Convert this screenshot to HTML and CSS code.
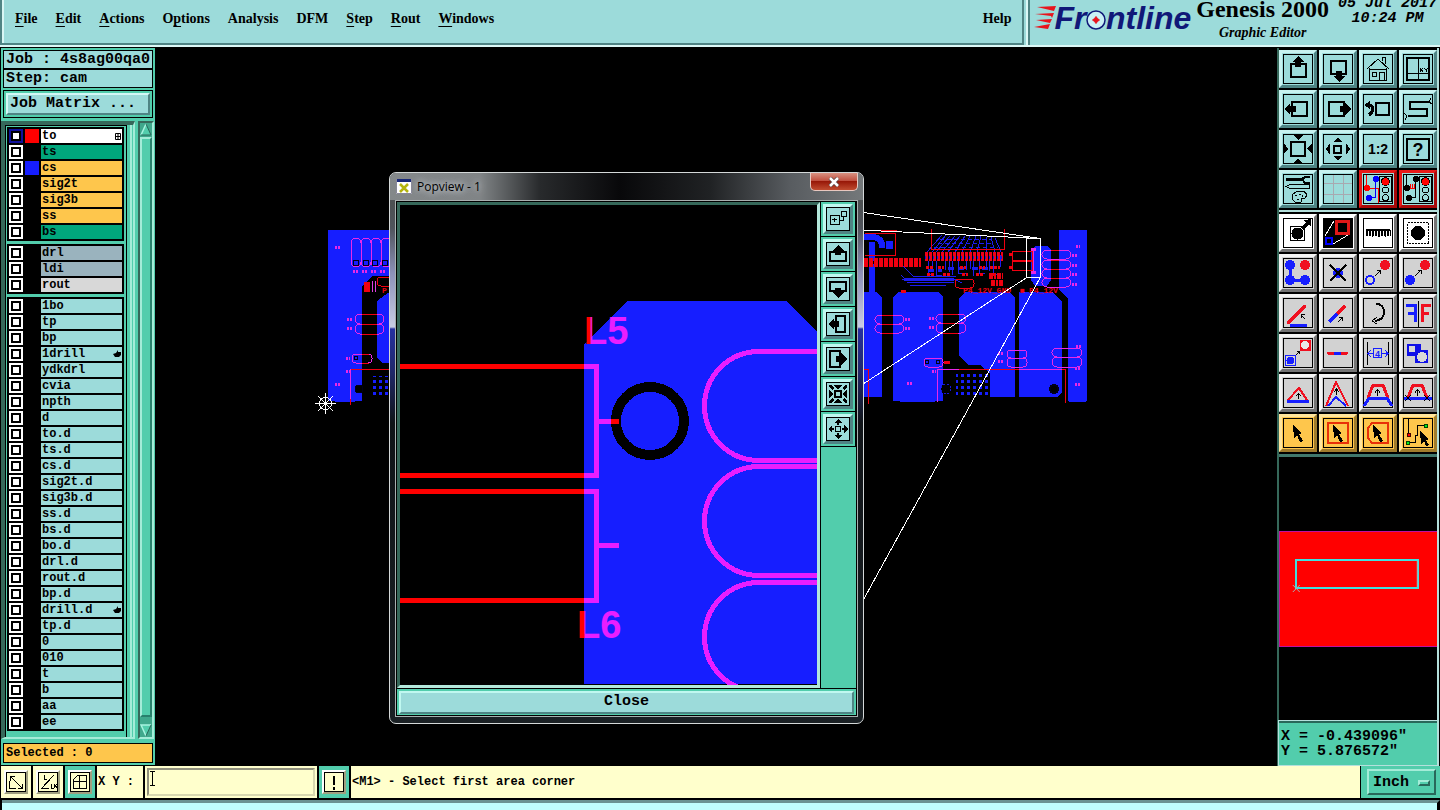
FILE: index.html
```html
<!DOCTYPE html>
<html lang="en">
<head>
<meta charset="utf-8">
<title>Genesis 2000 Graphic Editor</title>
<link rel="stylesheet" href="styles.css">
</head>
<body>
<header class="topbar">
  <nav class="menubar">
    <button class="menu"><u>F</u>ile</button>
    <button class="menu"><u>E</u>dit</button>
    <button class="menu"><u>A</u>ctions</button>
    <button class="menu">O<u>p</u>tions</button>
    <button class="menu">Analysis</button>
    <button class="menu">DFM</button>
    <button class="menu"><u>S</u>tep</button>
    <button class="menu"><u>R</u>out</button>
    <button class="menu"><u>W</u>indows</button>
    <button class="menu menu-help">Help</button>
  </nav>
  <div class="brand">
    <div class="logo">
      <svg class="logo-speed" width="22" height="24" viewBox="0 0 22 24" fill="#e8141c"><path d="M3 1l19-1-2 5zM1 8l19-1-2 5-1-2zM2 14l16-1-2 4zM0 21l16-3-2 5z"/></svg>
      <span class="logo-text">Fr<span class="logo-o">o<svg width="20" height="20" viewBox="0 0 20 20"><circle cx="10" cy="10" r="9" fill="#c9f0f4" stroke="#101878" stroke-width="1.5"/><path d="M10 6.500l1.500 2 2 1.500-2 1.500-1.500 2-1.500-2-2-1.500 2-1.500z" fill="#e8141c" stroke="#e8141c"/></svg></span>ntline</span>
    </div>
    <div class="product"><div class="product-name">Genesis 2000</div><div class="product-sub">Graphic Editor</div></div>
    <div class="clock">05 Jul 2017<br>10:24 PM</div>
  </div>
</header>

<main class="main">
  <aside class="left">
    <div class="jobbox"><div class="jobline">Job : 4s8ag00qa0</div><div class="jobline">Step: cam</div></div>
    <div class="matrix-frame"><button class="matrix">Job Matrix ...</button></div>
    <div class="layers">
      <div class="layer-frame"><div class="layer-inner">
        <div class="group">
          <label class="layer current"><input type="checkbox"><i class="swatch red"></i><span class="tag white">to<svg width="6" height="7" viewBox="0 0 6 7"><path d="M.5.500h5v6h-5zM3 0v7M0 3.500h6" fill="none" stroke="#000"/></svg></span></label>
          <label class="layer"><input type="checkbox"><i class="swatch"></i><span class="tag green">ts</span></label>
          <label class="layer"><input type="checkbox"><i class="swatch blue"></i><span class="tag gold">cs</span></label>
          <label class="layer"><input type="checkbox"><i class="swatch"></i><span class="tag gold">sig2t</span></label>
          <label class="layer"><input type="checkbox"><i class="swatch"></i><span class="tag gold">sig3b</span></label>
          <label class="layer"><input type="checkbox"><i class="swatch"></i><span class="tag gold">ss</span></label>
          <label class="layer"><input type="checkbox"><i class="swatch"></i><span class="tag green">bs</span></label>
        </div>
        <div class="group">
          <label class="layer"><input type="checkbox"><i class="swatch"></i><span class="tag slate">drl</span></label>
          <label class="layer"><input type="checkbox"><i class="swatch"></i><span class="tag slate">ldi</span></label>
          <label class="layer"><input type="checkbox"><i class="swatch"></i><span class="tag grey">rout</span></label>
        </div>
        <div class="group">
          <label class="layer"><input type="checkbox"><i class="swatch"></i><span class="tag">1bo</span></label>
          <label class="layer"><input type="checkbox"><i class="swatch"></i><span class="tag">tp</span></label>
          <label class="layer"><input type="checkbox"><i class="swatch"></i><span class="tag">bp</span></label>
          <label class="layer"><input type="checkbox"><i class="swatch"></i><span class="tag">1drill<svg width="8" height="8" viewBox="0 0 8 8"><path d="M0 4l3-1 2-3v2h3v3l-2 2H2z"/></svg></span></label>
          <label class="layer"><input type="checkbox"><i class="swatch"></i><span class="tag">ydkdrl</span></label>
          <label class="layer"><input type="checkbox"><i class="swatch"></i><span class="tag">cvia</span></label>
          <label class="layer"><input type="checkbox"><i class="swatch"></i><span class="tag">npth</span></label>
          <label class="layer"><input type="checkbox"><i class="swatch"></i><span class="tag">d</span></label>
          <label class="layer"><input type="checkbox"><i class="swatch"></i><span class="tag">to.d</span></label>
          <label class="layer"><input type="checkbox"><i class="swatch"></i><span class="tag">ts.d</span></label>
          <label class="layer"><input type="checkbox"><i class="swatch"></i><span class="tag">cs.d</span></label>
          <label class="layer"><input type="checkbox"><i class="swatch"></i><span class="tag">sig2t.d</span></label>
          <label class="layer"><input type="checkbox"><i class="swatch"></i><span class="tag">sig3b.d</span></label>
          <label class="layer"><input type="checkbox"><i class="swatch"></i><span class="tag">ss.d</span></label>
          <label class="layer"><input type="checkbox"><i class="swatch"></i><span class="tag">bs.d</span></label>
          <label class="layer"><input type="checkbox"><i class="swatch"></i><span class="tag">bo.d</span></label>
          <label class="layer"><input type="checkbox"><i class="swatch"></i><span class="tag">drl.d</span></label>
          <label class="layer"><input type="checkbox"><i class="swatch"></i><span class="tag">rout.d</span></label>
          <label class="layer"><input type="checkbox"><i class="swatch"></i><span class="tag">bp.d</span></label>
          <label class="layer"><input type="checkbox"><i class="swatch"></i><span class="tag">drill.d<svg width="8" height="8" viewBox="0 0 8 8"><path d="M0 4l3-1 2-3v2h3v3l-2 2H2z"/></svg></span></label>
          <label class="layer"><input type="checkbox"><i class="swatch"></i><span class="tag">tp.d</span></label>
          <label class="layer"><input type="checkbox"><i class="swatch"></i><span class="tag">0</span></label>
          <label class="layer"><input type="checkbox"><i class="swatch"></i><span class="tag">010</span></label>
          <label class="layer"><input type="checkbox"><i class="swatch"></i><span class="tag">t</span></label>
          <label class="layer"><input type="checkbox"><i class="swatch"></i><span class="tag">b</span></label>
          <label class="layer"><input type="checkbox"><i class="swatch"></i><span class="tag">aa</span></label>
          <label class="layer"><input type="checkbox"><i class="swatch"></i><span class="tag">ee</span></label>
        </div>
      </div></div>
      <div class="scroll">
        <svg width="12" height="13" viewBox="0 0 12 13"><rect width="12" height="13" fill="#3fa88c"/><path d="M6 1l5 11H1z" fill="#52cdac"/><path d="M6 1L1 12" stroke="#a8f4e0" stroke-width="1.500"/><path d="M6 1l5 11H1" fill="none" stroke="#28685a"/></svg>
        <div class="thumb"></div>
        <svg width="12" height="13" viewBox="0 0 12 13"><rect width="12" height="13" fill="#3fa88c"/><path d="M1 1h10L6 12z" fill="#52cdac"/><path d="M11 1H1l5 11" fill="none" stroke="#a8f4e0" stroke-width="1.500"/><path d="M11 1L6 12" stroke="#28685a"/></svg>
      </div>
    </div>
    <div class="selected">Selected : 0</div>
  </aside>

  <section class="workspace">
    <svg class="board" viewBox="155 48 1122 718" preserveAspectRatio="xMinYMin slice" fill="none" shape-rendering="crispEdges">
      <defs>
        <pattern id="dots" width="6" height="6" patternUnits="userSpaceOnUse"><rect x="1" y="2" width="3" height="3" fill="#161eff"/></pattern>
      </defs>
      <g fill="#161eff">
        <path d="M328 230h62v46h-18l-10 11v114h-34z"/>
        <path d="M392 290l-15 11v57l5 5h10z"/>
        <path d="M864 292h12l6 6v99h-18z"/>
        <path d="M893 297l5-5h40l5 5v104h-50z"/>
        <path d="M959 298l6-6h45l5 6v99h-25v-24l-10-8h-12l-9-9z"/>
        <path d="M1019 292h33l10 10v90l-5 5h-38z"/>
        <path d="M1059 230h28v171h-19V299l-9-9z"/>
        <path d="M1035 246h12l4 4v30l-4 6h-12l-4-6v-30z"/>
        <path d="M886 241h7v8h-7zM869 242h6v50h-6z"/>
        <path d="M1069 401h17v1h-17zM335 401h20v1h-20zM900 401h35v1h-35z"/>
      </g>
      <path d="M864 237h10q9 2 8 11" stroke="#161eff" stroke-width="6"/>
      <!-- connector fan-out traces -->
      <g stroke="#1c1cf0">
        <path d="M942 235l-15 17M946 235l-14 17M950 236l-14 16M955 236l-13 16M960 236l-12 16M965 236l-10 16M970 236l-8 16M976 236l-6 16M981 236l-4 16M986 237l1 15M991 237l4 15M995 238l6 14"/>
        <path d="M940 239h52M938 243h55M934 247h64" stroke-dasharray="4 3"/>
        <path d="M928 261v12l4 2M932 261v9M936 261v14h6M945 261v9M949 261v11M952 261v14M958 261v12h9M966 261v9M970 261v8M973 261v15M979 261v12h6M986 261v9M989 261v10M993 261v13h6M1000 255v12"/>
        <path d="M899 262l14 14h43M902 279h52l8 4M907 282h47M910 285h36M905 279l-4-4"/>
        <path d="M928 270h14M948 268h16M972 268h20" stroke-width="3" stroke-dasharray="6 4"/>
      </g>
      <path d="M904 279h50" stroke="#1c1cf0" stroke-width="3"/>
      <path d="M925 256h78" stroke="#f00018" stroke-width="9" stroke-dasharray="3 1"/>
      <path d="M925 257h78" stroke="#1818d8" stroke-width="3" stroke-dasharray="1 3"/>
      <g stroke="#f00010">
        <path d="M864 262h57" stroke-width="9" stroke-dasharray="4 1"/>
        <path d="M868 262h52" stroke="#000" stroke-width="3" stroke-dasharray="1 4"/>
        <path d="M865 233.500h30v22h-30M931.500 229v20h73v-20M1012 251.500h20v9h-20zM1012 261.500h20v9h-20zM865 230.500h32"/>
        <path d="M926 267h8M938 267h6M960 267h6M979 267h6M990 267h10M927 274h8M943 274h8M962 274h6M976 274h8M993 274h8" stroke-width="3" stroke-dasharray="3 1"/>
        <path d="M989 276h14M991 283h12" stroke-width="6" stroke-dasharray="4 1 2 1"/>
        <rect x="955" y="279" width="19" height="9" rx="4"/>
        <path d="M901 291h5M1009 254h3M1009 267h3" stroke-width="3"/>
        <path d="M937.500 369.500h128v33M864 369.500h4.500v34M350.500 369.500H390M350.500 369v36"/>
        <rect x="377" y="277" width="18" height="9" rx="4"/>
        <path d="M367 282v10" stroke-width="6"/><path d="M372 281v11M375 281v11" stroke="#e040e0"/>
      </g>
      <g font-family="Liberation Mono, monospace" font-size="8" fill="#f00010">
        <text x="963" y="293">P4_12V_GND</text><text x="1020" y="293">■</text><text x="1029" y="293">P4_12V</text><text x="382" y="293">P</text>
      </g>
      <g stroke="#e828e8">
        <rect x="351" y="238" width="10" height="29" rx="5"/><rect x="361" y="238" width="10" height="29" rx="5"/><rect x="371" y="238" width="10" height="29" rx="5"/><rect x="381" y="238" width="10" height="29" rx="5"/>
        <rect x="355" y="314" width="29" height="10" rx="5"/><rect x="355" y="324" width="29" height="10" rx="5"/><rect x="352" y="354" width="20" height="9" rx="4"/>
        <rect x="1042" y="250" width="29" height="9" rx="5"/><rect x="1042" y="260" width="29" height="9" rx="5"/><rect x="1042" y="269" width="29" height="9" rx="5"/><rect x="1042" y="278" width="29" height="9" rx="5"/>
        <rect x="875" y="315" width="29" height="9" rx="5"/><rect x="875" y="324" width="29" height="9" rx="5"/>
        <rect x="936" y="314" width="30" height="9" rx="5"/><rect x="936" y="323" width="30" height="10" rx="5"/><rect x="924" y="358" width="19" height="9" rx="4"/>
        <rect x="1007" y="350" width="20" height="8" rx="4"/><rect x="1007" y="358" width="20" height="9" rx="4"/>
        <rect x="1052" y="348" width="30" height="9" rx="5"/><rect x="1052" y="357" width="30" height="10" rx="5"/>
        <path d="M937.500 369v33M350.500 369v30M938 369.500h21M1019 369.500h43M1033.500 248v26"/>
      </g>
      <g stroke="#f00010"><path d="M362 314.500h15M362 324.500h15M362 334.500h15M362 354.500h7M362 363.500h7M882 315.500h11M882 324.500h11M882 333.500h11M943 314.500h15M943 323.500h15M943 333.500h15M1051 250.500h8M1051 260.500h8M1051 269.500h8M1051 278.500h8"/></g>
      <g stroke="#e828e8" stroke-width="3" stroke-dasharray="2 1">
        <path d="M335 247.500h6M353 271.500h6M362 271.500h6M371 271.500h6M380 271.500h6M347 319.500h5M347 328.500h5M346 358.500h4M346 371.500h4M335 384.500h6M905 319.500h6M905 328.500h6M929 318.500h6M929 327.500h6M932 371.500h4M907 383.500h6M998 353.500h6M998 361.500h6M1076 246.500h4M1072 255.500h5M1072 265.500h5M1072 274.500h5M1072 284.500h5M1076 346.500h5M1075 368.500h6M1075 384.500h6M1031 249.500h5M1031 272.500h5"/>
      </g>
      <path d="M944 362.500h6" stroke="#f00010" stroke-width="3"/>
      <g stroke="#000018" fill="none">
        <circle cx="356" cy="263" r="3"/><circle cx="366" cy="263" r="3"/><circle cx="375" cy="263" r="3"/><circle cx="385" cy="263" r="3"/>
        <circle cx="359" cy="389" r="4" fill="#000"/><circle cx="1054" cy="389" r="4" fill="#000" stroke-width="2"/>
        <circle cx="927" cy="362" r="2"/><circle cx="938" cy="362" r="2"/><circle cx="356" cy="358" r="2"/>
      </g>
      <path d="M943 384q-4 5 0 10z" fill="#000"/><circle cx="946" cy="389" r="5" stroke="#1818d8" stroke-dasharray="2 2"/>
      <rect x="956" y="374" width="33" height="24" fill="url(#dots)"/><rect x="370" y="376" width="20" height="21" fill="url(#dots)"/>
      <g stroke="#fff">
        <path d="M860 212l180 26.500M860 230l180 8.500M1026.500 238.500h14v39h-14zM1026 278L860 386M1040 278L860 606"/>
        <path d="M315 403.500h21M325.500 393v21M318 396l15 15M318 411l15-15"/><circle cx="325.500" cy="403.500" r="6"/>
      </g>
    </svg>

    <div class="popup">
      <div class="popup-title">
        <svg class="popup-icon" width="16" height="15" viewBox="0 0 16 15"><rect width="16" height="15" fill="#fff"/><rect width="16" height="3" fill="#182878"/><path d="M4 5l8 8M12 5l-8 8" stroke="#b4b410" stroke-width="2.500"/><path d="M.5 0v14.500h15V0" fill="none" stroke="#889"/></svg>
        <span class="popup-name">Popview - 1</span>
        <button class="popup-x" aria-label="Close window"><svg width="12" height="10" viewBox="0 0 12 10"><path d="M2 1l8 8M10 1L2 9" stroke="#544" stroke-width="4"/><path d="M2 1l8 8M10 1L2 9" stroke="#fff" stroke-width="2.500"/></svg></button>
      </div>
      <div class="popup-body">
        <div class="popup-content">
          <svg class="view" width="417" height="480" viewBox="400 205 417 480" fill="none" shape-rendering="crispEdges">
            <defs>
              <linearGradient id="cut5" gradientUnits="userSpaceOnUse" x1="590" x2="591" y1="0" y2="0"><stop offset="0" stop-color="#f00"/><stop offset="1" stop-color="#e81eff"/></linearGradient>
              <linearGradient id="cut6" gradientUnits="userSpaceOnUse" x1="584" x2="585" y1="0" y2="0"><stop offset="0" stop-color="#f00"/><stop offset="1" stop-color="#e81eff"/></linearGradient>
            </defs>
            <path d="M584 684V344l44-43h158l31 31v352z" fill="#161eff"/>
            <circle cx="650" cy="421" r="34" stroke="#000" stroke-width="10"/>
            <g stroke="#f00" stroke-width="5"><path d="M400 366.500h184M400 475.500h184M400 491.500h184M400 600.500h184"/></g>
            <g stroke="#e81eff" stroke-width="5">
              <path d="M584 366.500h12v109h-12M596 421.500h23M584 491.500h12v109h-12M596 545.500h23"/>
              <path d="M820 351.500h-61a54.500 54.500 0 0 0 0 109h61M820 466.500h-61a54.500 54.500 0 0 0 0 109h61M820 582.500h-61a54.500 54.500 0 0 0 0 109h61"/>
            </g>
            <path d="M611 421.500h8" stroke="#f00" stroke-width="5"/>
            <g font-family="Liberation Sans, sans-serif" font-weight="700" font-size="38"><text x="584" y="344" fill="url(#cut5)">L5</text><text x="577" y="638" fill="url(#cut6)">L6</text></g>
          </svg>
          <div class="popup-tools">
            <button class="ptool" aria-label="Detach view"><svg viewBox="0 0 22 22"><path class="o" d="M3 7h9v9H3zM14 3h5v5h-5zM12 12h4V8M5 11.500h5M7 9.500v4"/></svg></button>
            <button class="ptool" aria-label="Pan up"><svg viewBox="0 0 22 22"><path class="b" d="M3 9h16v9H3z"/><path class="k" d="M11 2l6 6h-3v4H8V8H5z"/></svg></button>
            <button class="ptool" aria-label="Pan down"><svg viewBox="0 0 22 22"><path class="b" d="M3 4h16v9H3z"/><path class="k" d="M11 20l6-6h-3v-4H8v4H5z"/></svg></button>
            <button class="ptool" aria-label="Pan left"><svg viewBox="0 0 22 22"><path class="b" d="M9 3h9v16H9z"/><path class="k" d="M1 11l6-6v3h5v6H7v3z"/></svg></button>
            <button class="ptool" aria-label="Pan right"><svg viewBox="0 0 22 22"><path class="b" d="M3 3h10v16H3z"/><path class="k" d="M20 11l-6-6v3H9v6h5v3z"/></svg></button>
            <button class="ptool" aria-label="Zoom in"><svg viewBox="0 0 22 22"><path class="b" d="M8 8h6v6H8z"/><path class="k" d="M6 2h10l-5 4zM6 20h10l-5-4zM2 6v10l4-5zM20 6v10l-4-5zM2 2h2l3 3-2 2-3-3zM20 2h-2l-3 3 2 2 3-3zM2 20h2l3-3-2-2-3 3zM20 20h-2l-3-3 2-2 3 3z"/></svg></button>
            <button class="ptool" aria-label="Zoom out"><svg viewBox="0 0 22 22"><path class="o" d="M8.500 8.500h5v5h-5z"/><path class="k" d="M11 1l4 4h-3v2h-2V5H7zM11 21l4-4h-3v-2h-2v2H7zM1 11l4-4v8zM21 11l-4-4v8zM5 10h2v2H5zM15 10h2v2h-2z"/></svg></button>
          </div>
        </div>
        <div class="close-frame"><button class="close">Close</button></div>
      </div>
    </div>
  </section>

  <aside class="right">
    <div class="tools">
      <button class="tool" aria-label="Pan up"><svg viewBox="0 0 30 30"><path class="b" d="M8 10h15v13H8z"/><path class="k" d="M15 2l6 6h-3v5h-6V8H9z"/></svg></button>
      <button class="tool" aria-label="Pan down"><svg viewBox="0 0 30 30"><path class="b" d="M8 7h15v13H8z"/><path class="k" d="M16 28l6-6h-3v-5h-6v5h-3z"/></svg></button>
      <button class="tool" aria-label="Home"><svg viewBox="0 0 30 30"><path class="o" d="M4 15L15 5l11 10M6.500 14v12h17V14M6 15h18M9.500 18h4v4h-4zM16.500 26v-8h5v8M19 7V3M22 10V3h-3M21 1l3-1"/></svg></button>
      <button class="tool" aria-label="XY view"><svg viewBox="0 0 30 30"><path class="b" d="M4 4h22v22H4z"/><path class="o" d="M15.500 4v22M4 19.500h22M17 14l3 4M20 14l-3 4M21 14l2 2 2-2M23 16v2"/></svg></button>
      <button class="tool" aria-label="Pan left"><svg viewBox="0 0 30 30"><path class="b" d="M9 8h15v14H9z"/><path class="k" d="M1 15l6-6v3h6v6H7v3z"/></svg></button>
      <button class="tool" aria-label="Pan right"><svg viewBox="0 0 30 30"><path class="b" d="M6 8h15v14H6z"/><path class="k" d="M28 15l-6-6v3h-5v6h5v3z"/></svg></button>
      <button class="tool" aria-label="Previous view"><svg viewBox="0 0 30 30"><path class="b" d="M13 9h13v12H13z"/><path d="M4 11h3q3 1 3 4t-4 6" fill="none" stroke="#000" stroke-width="3"/><path class="k" d="M1 11l6-4v8z"/></svg></button>
      <button class="tool" aria-label="Serpentine"><svg viewBox="0 0 30 30"><path class="b" d="M26 8H7v7h17v7H5"/><path class="o" d="M26 8l2-4M26 8l3 2M4 22l-3-3M4 22l-2 4"/></svg></button>
      <button class="tool" aria-label="Zoom in"><svg viewBox="0 0 30 30"><path class="b" d="M8 8h14v14H8z"/><path class="k" d="M10 1h10l-5 5zM10 29h10l-5-4zM1 9v11l4-5zM29 9v11l-5-5z"/></svg></button>
      <button class="tool" aria-label="Zoom out"><svg viewBox="0 0 30 30"><path class="b" d="M11 12h7v7h-7z"/><path class="k" d="M15 4l5 4H10zM15 26l5-4H10zM3 15l4-6v12zM27 15l-4-6v12z"/></svg></button>
      <button class="tool" aria-label="Scale"><svg viewBox="0 0 30 30"><text x="15" y="20" text-anchor="middle" font-family="Liberation Sans, sans-serif" font-weight="700" font-size="14">1:2</text></svg></button>
      <button class="tool" aria-label="Query"><svg viewBox="0 0 30 30"><path class="b" d="M4 5h22v21H4z"/><text x="15" y="22" text-anchor="middle" font-family="Liberation Sans, sans-serif" font-weight="700" font-size="18">?</text></svg></button>
      <button class="tool" aria-label="Settings"><svg viewBox="0 0 30 30"><path d="M3 5.500h17" stroke="#000" stroke-width="3"/><path class="b" d="M27 3h-5l-3 2 3 4h5"/><path class="o" d="M3 12.500l4-2h19v4H7zM9 21l5-4h7l3 4-2 3h-3l-1 4h-6l-3-3zM12 22l2-1M16 20h2M19 21v2M14 25h2"/></svg></button>
      <button class="tool" aria-label="Grid"><svg viewBox="0 0 30 30"><path d="M10.500 1v28M20.500 1v28M1 9.500h28M1 20.500h28" stroke="#a8a8b0"/></svg></button>
      <button class="tool alert" aria-label="Net status"><svg viewBox="0 0 30 30"><path d="M3.500 1v12M4 14h11v15" fill="none" stroke="#f00"/><path d="M12.500 5v18H8" fill="none" stroke="#00f"/><circle cx="4" cy="14" r="3" fill="#f00"/><circle cx="13" cy="5" r="3" fill="#00f"/><circle cx="6" cy="24" r="3" fill="#00f"/><path class="o" d="M16.500 2.500h12v25h-12z"/><circle cx="22.500" cy="7.500" r="4" fill="#f00" stroke="#000"/><circle class="o" cx="22.500" cy="16" r="3"/><circle class="o" cx="22.500" cy="23.500" r="3"/></svg></button>
      <button class="tool alert" aria-label="Pin status"><svg viewBox="0 0 30 30"><path class="o" d="M3.500 1v12M12.500 5v18H6"/><path d="M6 14.500h6M7.500 10v4M9.500 10v4M11.500 10v4" stroke="#f00"/><circle cx="4" cy="14" r="3"/><circle cx="13" cy="5" r="3"/><circle cx="6" cy="24" r="3"/><path class="o" d="M16.500 2.500h12v25h-12z"/><circle cx="22.500" cy="7.500" r="4" fill="#f00" stroke="#000"/><circle class="o" cx="22.500" cy="16" r="3"/><circle class="o" cx="22.500" cy="23.500" r="3"/></svg></button>
    </div>
    <div class="tools edit">
      <button class="tool bright" aria-label="Select feature"><svg viewBox="0 0 30 30"><path class="o" d="M7.500 8.500h14v14h-14z"/><circle cx="14.500" cy="15.500" r="6"/><path class="k" d="M28 1v8l-2-2-6 5-2-3 5-4-2-3z"/></svg></button>
      <button class="tool bright" aria-label="Popview"><svg viewBox="0 0 30 30"><path class="k" d="M1 1h28v28H1z"/><path d="M13 3h12v12H13z" fill="none" stroke="#e01818" stroke-width="3"/><path d="M3 20h6v6H3z" fill="none" stroke="#00f" stroke-width="2"/><path d="M2 18L11 3M10 26l15-9" stroke="#fff"/></svg></button>
      <button class="tool bright" aria-label="Measure"><svg viewBox="0 0 30 30"><path class="k" d="M3 11h24v2H3z"/><path d="M3 15.500h25" stroke="#000" stroke-width="7" stroke-dasharray="2 1"/><path d="M3 19h25" stroke="#fff" stroke-width="3" stroke-dasharray="5 2"/></svg></button>
      <button class="tool bright" aria-label="Area select"><svg viewBox="0 0 30 30"><path class="o" d="M4.500 4.500h21v21h-21z" stroke-dasharray="2 1"/><circle cx="15" cy="15" r="7"/></svg></button>
      <button class="tool" aria-label="Chain"><svg viewBox="0 0 30 30"><path d="M7 7v15h15" fill="none" stroke="#161eff" stroke-width="3"/><circle cx="7" cy="7" r="5" fill="#161eff"/><circle cx="7" cy="22" r="5" fill="#161eff"/><circle cx="22" cy="22" r="5" fill="#161eff"/><circle cx="22" cy="7" r="5" fill="#f01020"/></svg></button>
      <button class="tool" aria-label="Delete"><svg viewBox="0 0 30 30"><circle cx="15" cy="15" r="5" fill="#161eff"/><path d="M7 7l16 16M23 7L7 23" stroke="#000" stroke-width="2"/></svg></button>
      <button class="tool" aria-label="Move"><svg viewBox="0 0 30 30"><circle cx="22" cy="7" r="5" fill="#f01020"/><circle cx="7" cy="22" r="4" fill="none" stroke="#161eff" stroke-width="2"/><path class="o" d="M12 18l5-5M14 12.500h3.500V16"/></svg></button>
      <button class="tool" aria-label="Copy"><svg viewBox="0 0 30 30"><circle cx="22" cy="7" r="5" fill="#f01020"/><circle cx="7" cy="22" r="5" fill="#161eff"/><path class="o" d="M12 18l6-6M15 12.500h3.500V16"/></svg></button>
      <button class="tool" aria-label="Rotate line"><svg viewBox="0 0 30 30"><path d="M5 25L22 8" stroke="#f01020" stroke-width="3" stroke-linecap="round"/><path d="M7 27h17" stroke="#161eff" stroke-width="3"/><path class="o" d="M22 21l-4-4M18.500 20v-3.500H22"/></svg></button>
      <button class="tool" aria-label="Stretch line"><svg viewBox="0 0 30 30"><path d="M14 16l8-8" stroke="#f01020" stroke-width="3"/><path d="M6 24l8-8" stroke="#161eff" stroke-width="3"/><path class="o" d="M15 24l4-4M16 19.500h3.500V23"/></svg></button>
      <button class="tool" aria-label="Rotate"><svg viewBox="0 0 30 30"><path d="M13 6q8 0 8 8t-9 9" fill="none" stroke="#000" stroke-width="2"/><path d="M14 19l-5 4 5 3" class="o"/></svg></button>
      <button class="tool" aria-label="Mirror"><svg viewBox="0 0 30 30"><path class="o" d="M15.500 3v26"/><path d="M3 7h9v17M12 15H5" fill="none" stroke="#161eff" stroke-width="3"/><path d="M28 7h-9v17M19 15h7" fill="none" stroke="#f01020" stroke-width="3"/></svg></button>
      <button class="tool" aria-label="Transform"><svg viewBox="0 0 30 30"><path d="M17 2h11v11H17z" fill="#f01020"/><circle cx="22" cy="7" r="4" fill="#e8e8e8"/><path d="M2.500 17.500h10v10h-10z" fill="none" stroke="#161eff"/><circle cx="7.500" cy="22.500" r="4" fill="#161eff"/><path class="o" d="M13 17l3-3M14 13.500h2.500V16"/></svg></button>
      <button class="tool" aria-label="Connect"><svg viewBox="0 0 30 30"><path d="M5 15h19" stroke="#f01020" stroke-width="3" stroke-linecap="round"/><path d="M11 15h7" stroke="#161eff" stroke-width="3"/></svg></button>
      <button class="tool" aria-label="Spacing"><svg viewBox="0 0 30 30"><path class="o" d="M4.500 4v23M25.500 4v23"/><path d="M5 15.500h6M18 15.500h7M8 12l-3 3.500L8 19M22 12l3 3.500-3 3.500M10.500 10.500h8v9h-8z" fill="none" stroke="#161eff"/><text x="12" y="19" font-family="Liberation Sans, sans-serif" font-size="9" font-weight="700" fill="#161eff">4</text></svg></button>
      <button class="tool" aria-label="Merge"><svg viewBox="0 0 30 30"><path d="M4 6h14v6h7v13H12v-7H4z" fill="#1010e8"/><circle cx="9" cy="11" r="3.500" fill="#d8d8d8"/><circle cx="19" cy="19" r="5" fill="#d8d8d8"/></svg></button>
      <button class="tool" aria-label="Angle small"><svg viewBox="0 0 30 30"><path d="M5 22l11-12 8 12" fill="none" stroke="#f01020" stroke-width="2"/><path d="M4 23h22" stroke="#161eff" stroke-width="3"/><path class="o" d="M15.500 21v-5M13 18l2.500-2.500L18 18"/></svg></button>
      <button class="tool" aria-label="Angle large"><svg viewBox="0 0 30 30"><path d="M3 28L13 4l12 24" fill="none" stroke="#f01020" stroke-width="2"/><path d="M5 28l8-9 10 9" fill="none" stroke="#161eff" stroke-width="2"/><path class="o" d="M13.500 17v-6M11 14l2.500-3L16 14"/></svg></button>
      <button class="tool" aria-label="Trapezoid"><svg viewBox="0 0 30 30"><path d="M5 20L10 7h10l5 13" fill="none" stroke="#f01020" stroke-width="3"/><path d="M1 28l5-8h18l5 8" fill="none" stroke="#161eff" stroke-width="3"/><path class="o" d="M14.500 18v-6M12 14.500l2.500-3 2.500 3"/></svg></button>
      <button class="tool" aria-label="Trapezoid cut"><svg viewBox="0 0 30 30"><path d="M5 20L10 7h9l5 13" fill="none" stroke="#f01020" stroke-width="3"/><path d="M1 20.500h28" stroke="#161eff" stroke-width="3"/><path class="o" d="M14.500 18v-6M12 14.500l2.500-3 2.500 3M2 17l6 6M8 17l-6 6M21 17l6 6M27 17l-6 6"/></svg></button>
      <button class="tool gold" aria-label="Pick"><svg viewBox="0 0 30 30"><path class="k" d="M10 7l9 8-3 1 4 7-3 1-3-7-3 3z"/></svg></button>
      <button class="tool gold" aria-label="Pick in frame"><svg viewBox="0 0 30 30"><path d="M5 5h20v20H5z" fill="none" stroke="#e83008" stroke-width="2"/><path class="k" d="M10 7l9 8-3 1 4 7-3 1-3-7-3 3z"/></svg></button>
      <button class="tool gold" aria-label="Pick in polygon"><svg viewBox="0 0 30 30"><path d="M9 5h16v20H9l-4-5V10z" fill="none" stroke="#e83008" stroke-width="2"/><path class="k" d="M10 7l9 8-3 1 4 7-3 1-3-7-3 3z"/></svg></button>
      <button class="tool gold" aria-label="Pick net"><svg viewBox="0 0 30 30"><path class="o" d="M5.500 1v14M4 24.500h8v-7h2.500v-10H23"/><circle cx="6" cy="17" r="2" fill="#f00" stroke="#400"/><circle cx="5" cy="25" r="2" fill="#0e2" stroke="#040"/><circle cx="23" cy="8" r="2" fill="#0e2" stroke="#040"/><path class="k" d="M17 13l9 8-3 1 3 5-3 1-2-5-3 3z"/></svg></button>
    </div>
    <div class="overview">
      <svg viewBox="0 0 160 116" preserveAspectRatio="none" shape-rendering="crispEdges"><rect x=".5" y=".5" width="160" height="115" fill="#f00" stroke="#c010a0"/><rect x="17" y="29" width="124" height="28" fill="none" stroke="#40e0e0" stroke-width="2"/><path d="M140 30v26" stroke="#a8b0b0"/><path d="M14 54l7 7M21 54l-7 7" stroke="#a8b0b0"/></svg>
    </div>
    <div class="coords">X = -0.439096"<br>Y = 5.876572"</div>
  </aside>
</main>

<footer class="bottom">
  <div class="statusbar">
    <button class="stool" aria-label="Snap free"><svg viewBox="0 0 20 20"><path class="o" d="M4 4l12 12M4.500 9V4.500H9M16.500 12v4.500H12M3.500 9v7.500H10"/></svg></button>
    <button class="stool" aria-label="Snap slope"><svg viewBox="0 0 20 20"><path class="o" d="M3 17L16 3M6.500 3v4H9M3 16.500h8M13 12v4h3M16 12l3 4M19 12l-3 4"/></svg></button>
    <button class="stool on" aria-label="Snap grid"><svg viewBox="0 0 20 20"><path class="o" d="M3.500 16.500v-9l4-4h9v13zM9.500 3v13M3 9.500h13"/></svg></button>
    <label class="xy" for="xy">X Y :</label>
    <div class="xy-frame"><input id="xy" class="xy-input" type="text"><svg class="caret" width="5" height="15" viewBox="0 0 5 15"><path class="o" d="M0 .5h5M2.500 1v13M0 14.500h5"/></svg></div>
    <button class="stool on warn" aria-label="Warnings"><svg viewBox="0 0 20 20"><path d="M10 4v9M10 15v3" stroke="#000" stroke-width="2"/></svg></button>
    <output class="message">&lt;M1&gt; - Select first area corner</output>
    <div class="unit"><select class="unit-select" aria-label="Units"><option>Inch</option></select><span class="unit-mark"></span></div>
  </div>
  <div class="strip"></div>
</footer>
</body>
</html>
```
FILE: styles.css
```css
* { box-sizing: border-box; }

:root {
  --cyan: #9cdbda;
  --teal: #52cdac;
  --teal-dark: #36685a;
  --teal-light: #a4ecd8;
  --cream: #ffffcc;
  --gold: #fec64c;
  --mono: "Liberation Mono", monospace;
  --serif: "Liberation Serif", serif;
}

body {
  margin: 0;
  height: 100vh;
  display: flex;
  flex-direction: column;
  overflow: hidden;
  background: #000;
  color: #000;
  font: bold 15px/18px var(--mono);
}

button, input, select {
  margin: 0;
  padding: 0;
  border: 0;
  border-radius: 0;
  background: none;
  color: inherit;
  font: inherit;
}

svg { display: block; flex: none; }
.o { fill: none; stroke: #000; }
.b { fill: none; stroke: #000; stroke-width: 2; }
.k { fill: #000; }

/* header */
.topbar {
  display: flex;
  background: var(--cyan);
  border-bottom: 2px solid #dcf8f6;
  margin-bottom: 1px;
}
.menubar {
  flex: 1;
  display: flex;
  gap: 18px;
  padding: 9px 11px 14px 13px;
  border-left: 2px solid #4f8484;
  border-right: 2px solid #4f8484;
  border-bottom: 2px solid #4f8484;
  box-shadow: inset 2px 0 #d8f6f4;
}
.menu { font: bold 14px/20px var(--serif); }
.menu u { text-underline-offset: 3px; }
.menu-help { margin-left: auto; }
.brand {
  display: flex;
  height: 45px;
  padding: 0 3px 0 4px;
  margin-left: 4px;
  border-left: 2px solid #4f8484;
  outline: 2px solid #dcf8f6;
  overflow: hidden;
}
.logo { display: flex; align-items: flex-start; }
.logo-speed { margin-top: 6px; margin-right: -2px; }
.logo-text { font: italic bold 32px/36px "Liberation Sans", sans-serif; color: #101878; }
.logo-o { position: relative; color: transparent; }
.logo-o svg { position: absolute; left: 0; top: 10px; }
.product { margin-left: 5px; text-align: center; white-space: nowrap; }
.product-name { font: bold 24px/18px var(--serif); }
.product-sub { margin-top: 7px; font: italic bold 14px/16px var(--serif); }
.clock { margin: -4px 0 0 9px; font: italic bold 15px/15px var(--mono); text-align: center; white-space: nowrap; }

.main { flex: 1; display: flex; min-height: 0; }

/* left panel */
.left {
  width: 154px;
  margin: 0 0 1px 1px;
  padding: 2px;
  background: var(--teal);
  display: flex;
  flex-direction: column;
}
.jobbox, .matrix-frame, .selected { border: 1px solid #000; }
.jobline { padding-left: 2px; background: var(--cyan); line-height: 17px; white-space: nowrap; }
.jobline + .jobline { border-top: 2px solid #000; }
.matrix-frame { margin: 2px 0 3px; padding: 2px; }
.matrix {
  display: block;
  width: 100%;
  padding-left: 2px;
  text-align: left;
  background: var(--cyan);
  border: 2px solid;
  border-color: #d4f8f6 #4f8484 #4f8484 #d4f8f6;
}
.layers { flex: 1; display: flex; min-height: 0; margin: 0 -2px; }
.layer-frame {
  width: 134px;
  border: 4px solid;
  border-color: var(--teal-dark) var(--teal-light) var(--teal-light) var(--teal-dark);
  border-right-width: 2px;
  border-bottom-width: 2px;
}
.layer-inner {
  height: 100%;
  margin-right: 6px;
  padding: 1px 2px 0 1px;
  border: 1px solid #000;
  border-bottom: 0;
  box-shadow: 3px 0 var(--teal), 5px 0 var(--teal-light);
}
.group { padding: 2px 2px 0; margin-bottom: 3px; background: #000; }
.layer { display: flex; gap: 2px; padding-bottom: 2px; font: bold 12px/14px var(--mono); }
.layer input {
  appearance: none;
  width: 14px;
  height: 14px;
  border: 2px solid #fff;
  background: #fff;
  box-shadow: inset 0 0 0 2px #000;
}
.layer.current input { border-color: #10109c; }
.swatch { width: 14px; }
.tag { flex: 1; display: flex; align-items: center; justify-content: space-between; height: 14px; padding: 0 1px; background: var(--cyan); }
.red { background: #f00; }
.blue { background: #161eff; }
.white { background: #fff; }
.green { background: #00a67c; }
.slate { background: #9ab3be; }
.grey { background: #d8d8d8; }
.tag.gold { background: var(--gold); }
.scroll {
  margin-left: 3px;
  width: 16px;
  display: flex;
  flex-direction: column;
  gap: 1px;
  border: 2px solid;
  border-color: var(--teal-dark) var(--teal-light) var(--teal-light) var(--teal-dark);
  background: #3fa88c;
}
.thumb {
  flex: 1;
  margin-bottom: 6px;
  background: var(--teal);
  border: 2px solid;
  border-color: var(--teal-light) #28806c #28806c var(--teal-light);
}
.selected { margin-top: 4px; padding-left: 2px; background: var(--gold); font-size: 12px; }

/* canvas */
.workspace { flex: 1; position: relative; min-width: 0; overflow: hidden; }
.board { width: 100%; height: 100%; }

.popup {
  position: absolute;
  left: 234px;
  top: 124px;
  padding: 0 5px 6px;
  border: 1px solid #d4d8d8;
  border-radius: 7px;
  background: linear-gradient(#5c6064 0, #4c5052 30px, #50545c 55px, #8c90b8 100px, #c8cce4 154px, #2630a0 156px, #202868 200px, #101418 250px, #1a2024 100%);
}
.popup-title {
  display: flex;
  align-items: center;
  height: 27px;
  margin: 0 -5px;
  padding: 0 5px 0 6px;
  border-radius: 6px 6px 0 0;
  background: linear-gradient(90deg, #84888a 0, #808486 90px, #282a2c 150px, #08080a 230px, #202224 320px, #585c60 400px, #74787a 100%);
}
.popup-name {
  margin: 0 auto 0 5px;
  font: 12px/16px "Open Sans", sans-serif;
  text-shadow: 0 0 6px #c8ccd0, 0 0 8px #c8ccd0;
}
.popup-x {
  align-self: flex-start;
  width: 48px;
  height: 18px;
  display: grid;
  place-items: center;
  border: 1px solid #e8c8c0;
  border-top: 0;
  border-radius: 0 0 5px 5px;
  background: linear-gradient(#d89080, #c05040 45%, #981808 50%, #c04c30);
}
.popup-body { border: 1px solid #a8b0b0; padding: 1px; background: #000; }
.popup-content { display: flex; }
.view {
  box-sizing: content-box;
  border: 3px solid;
  border-color: var(--teal-dark) #b4e8dc #b4e8dc var(--teal-dark);
  background: #000;
}
.popup-tools { margin-left: 1px; background: var(--teal); }
.ptool {
  display: block;
  padding: 2px;
  border: 1px solid #000;
  border-width: 0 1px 1px 0;
  background: var(--teal);
}
.ptool svg {
  width: 30px;
  height: 30px;
  border: 3px solid;
  border-color: #c0f8f0 #4f8484 #4f8484 #c0f8f0;
  padding: 1px;
  background: var(--cyan);
  box-shadow: inset 0 0 0 1px #000;
  shape-rendering: crispEdges;
}
.close-frame { margin-top: 1px; padding: 2px 2px 1px; background: var(--teal); }
.close {
  display: block;
  width: 100%;
  padding: 0 0 1px;
  background: var(--cyan);
  border: 2px solid;
  border-color: #c0f8f0 #4f8484 #4f8484 #c0f8f0;
}

/* right panel */
.right {
  display: flex;
  flex-direction: column;
  width: 162px;
  margin-right: 1px;
  border-left: 2px solid var(--teal-dark);
  border-right: 2px solid #b4e0dc;
}
.tools {
  display: grid;
  grid-template-columns: repeat(4, 38px);
  gap: 2px;
  padding-top: 2px;
  border-bottom: 2px solid #b4e0dc;
}
.tools:first-child { padding-bottom: 2px; }
.tools.edit { border-bottom: 3px solid #40786c; padding-bottom: 2px; }
.tool {
  display: block;
  padding: 1px;
  border: 3px solid;
  border-color: #c8f2f0 #4f8484 #4f8484 #c8f2f0;
  background: var(--cyan);
}
.tool svg { width: 30px; height: 30px; box-shadow: inset 0 0 0 1px #000; shape-rendering: crispEdges; }
.tool.alert { border-color: #e81818 #a80808 #a80808 #e81818; }
.edit .tool { background: #d2d2d2; border-color: #f4f4f4 #747474 #747474 #f4f4f4; }
.edit .bright { background: #fff; border-color: #fff #747474 #747474 #fff; }
.edit .gold { background: var(--gold); border-color: #ffe49c #a07c2c #a07c2c #ffe49c; }
.overview { flex: 1; display: flex; align-items: center; min-height: 0; }
.overview svg { width: 100%; height: 116px; }
.coords {
  padding: 6px 2px;
  border-top: 2px solid #28685a;
  border-bottom: 1px solid #b4e0dc;
  outline: 1px solid #b4e0dc;
  background: var(--teal);
  line-height: 15px;
}

/* status line */
.statusbar { display: flex; height: 32px; margin-left: 1px; gap: 2px; font-size: 12px; background: #000; }
.stool { width: 30px; padding: 3px; background: var(--cream); }
.stool svg { width: 24px; height: 24px; border: 2px solid; border-color: #fff #a0a080 #a0a080 #fff; box-shadow: inset 0 0 0 1px #000; background: var(--cream); shape-rendering: crispEdges; }
.stool.on { background: var(--teal); }
.xy { width: 46px; padding-left: 1px; line-height: 32px; background: var(--cream); white-space: nowrap; }
.xy-frame { position: relative; width: 172px; padding: 2px; background: var(--cream); }
.xy-input { width: 100%; height: 100%; padding: 0 4px; border: 2px solid; border-color: #90907c #d8d8b0 #d8d8b0 #90907c; }
.caret { position: absolute; left: 5px; top: 5px; }
.message { flex: 1; padding-left: 1px; line-height: 32px; background: var(--cream); white-space: nowrap; }
.unit { position: relative; width: 79px; margin-left: -1px; padding: 3px 4px 3px 6px; background: var(--teal); }
.unit-select {
  appearance: none;
  width: 100%;
  height: 26px;
  padding: 2px 0 0 4px;
  border: 2px solid;
  border-color: var(--teal-light) #28685a #28685a var(--teal-light);
  font-size: 15px;
}
.unit-mark { position: absolute; right: 10px; top: 14px; width: 12px; height: 6px; border: 2px solid; border-color: var(--teal-light) #28685a #28685a var(--teal-light); }
.strip { height: 10px; margin: 2px 0 0 2px; background: #c0ffff; border-top: 3px solid #6b9494; border-right: 3px solid #000; }
```
